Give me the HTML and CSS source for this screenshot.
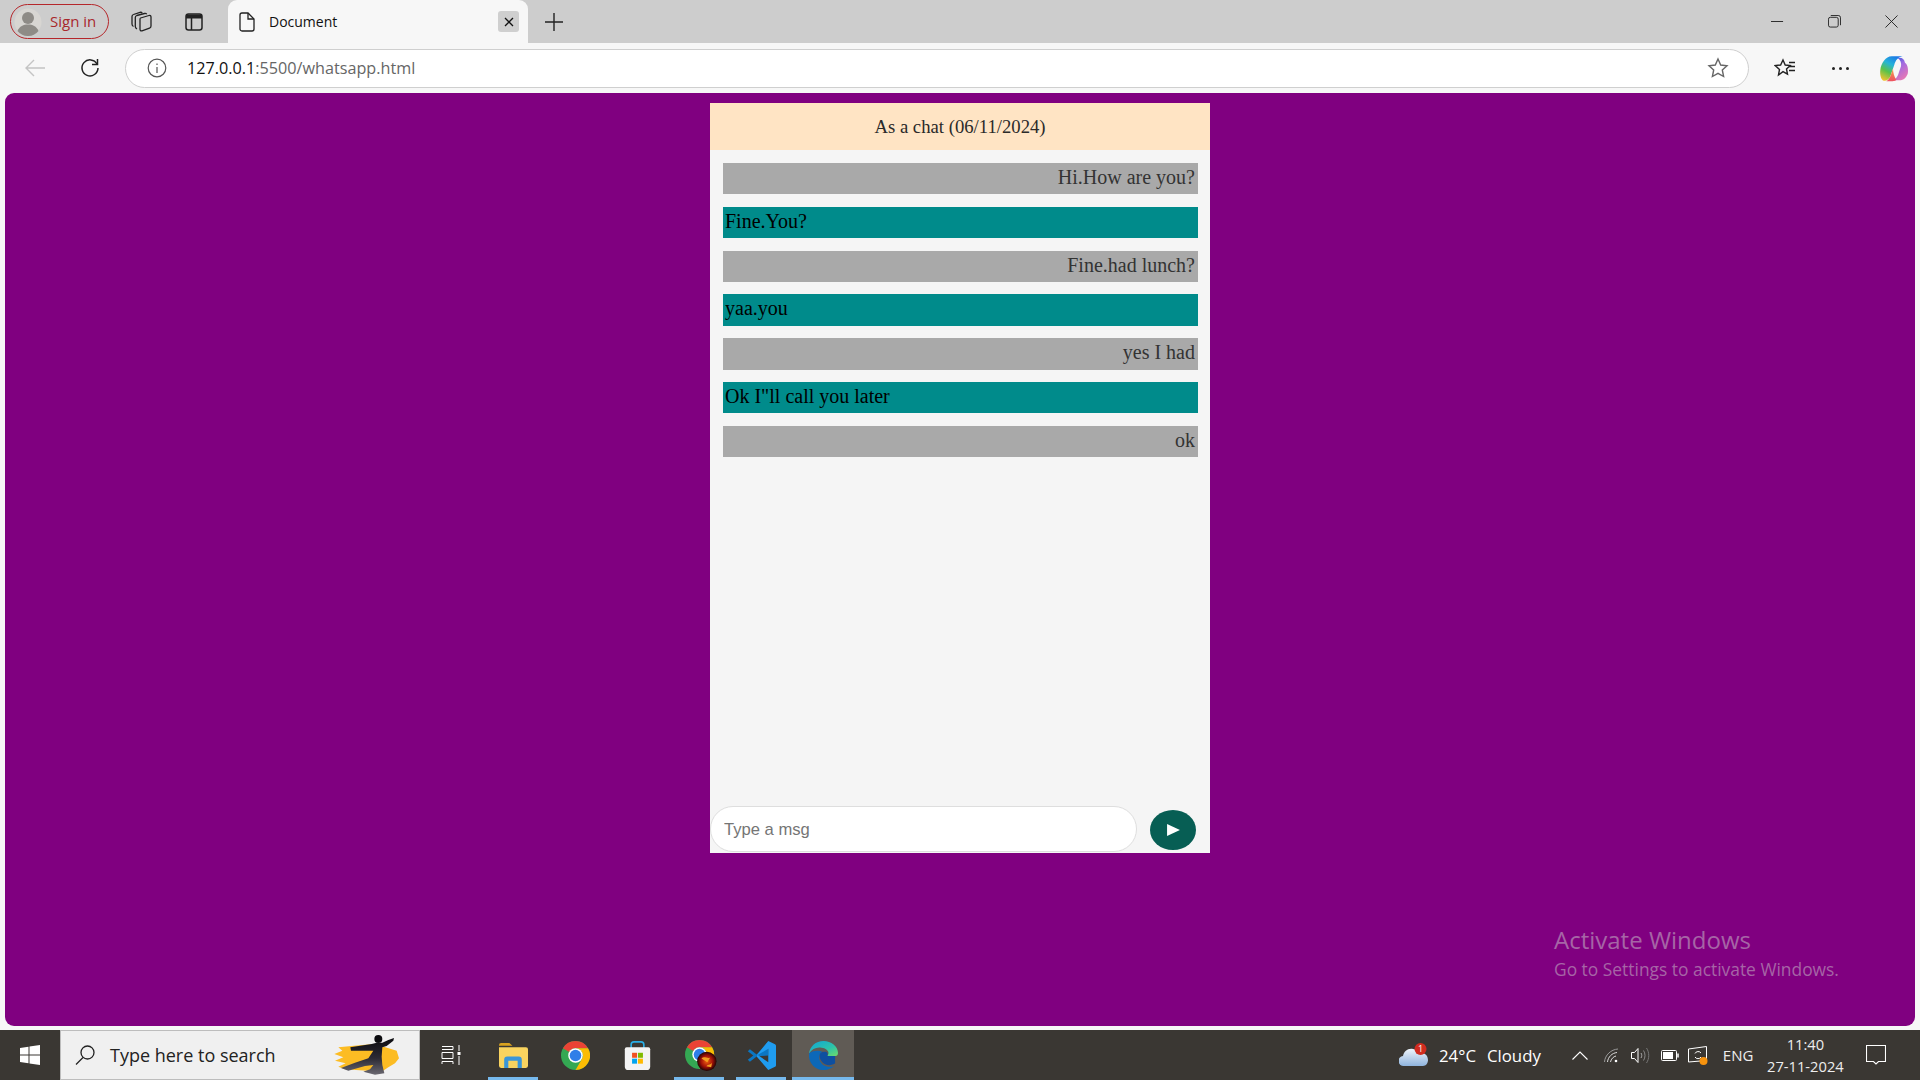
FILE: index.html
```html
<!DOCTYPE html>
<html lang="en">
<head>
    <meta charset="UTF-8">
    <title>Document</title>
    <link rel="stylesheet" href="styles.css">
</head>
<body>
    <!-- Tab strip -->
    <div class="tab-strip">
        <div class="sign-in">
            <svg class="avatar" viewBox="0 0 28 28"><circle cx="14" cy="14" r="13.5" fill="#d8d6d2"/><circle cx="14" cy="10" r="6" fill="#8e8b86"/><path d="M3.5 23c2-5 6-6.500 10.500-6.500s8.500 1.500 10.500 6.500a13.500 13.500 0 0 1-21 0z" fill="#8e8b86"/></svg>
            <span>Sign in</span>
        </div>
        <svg class="strip-icon collections" viewBox="0 0 21 21" fill="none" stroke="#222" stroke-width="1.300"><path d="M9.500 7 18 4.500c1-.3 2 .2 2 1.500v9c0 1-.5 1.800-1.500 2.100L11 19.800c-1.200.3-2-.3-2-1.500V8.500c0-.8 0-1.300.5-1.500z"/><path d="M6 18c-1-.5-1.700-1.300-1.700-2.500V6.500c0-1 .5-1.700 1.500-2L13.500 2.500c1-.2 1.800 0 2.200.8"/><path d="M2.500 15.500C1.500 15 1 14 1 13V5.500c0-1 .5-1.700 1.500-2L9 1.300c1-.2 1.700 0 2.200.7"/></svg>
        <svg class="strip-icon vertical-tabs" viewBox="0 0 18 18" fill="none" stroke="#222" stroke-width="1.500"><rect x="1" y="1" width="16" height="16" rx="2.500"/><path d="M1 3.500h16" stroke-width="4"/><path d="M6.500 5v12"/></svg>
        <div class="tab">
            <svg class="doc-icon" viewBox="0 0 16 20" fill="none" stroke="#222" stroke-width="1.300"><path d="M1 3a2 2 0 0 1 2-2h6l6 6v10a2 2 0 0 1-2 2H3a2 2 0 0 1-2-2z"/><path d="M9 1v6h6"/></svg>
            <span class="tab-title">Document</span>
            <div class="tab-close"><svg viewBox="0 0 10 10" stroke="#111" stroke-width="1.300"><path d="M1 1l8 8M9 1l-8 8"/></svg></div>
        </div>
        <svg class="new-tab" viewBox="0 0 18 18" stroke="#222" stroke-width="1.400"><path d="M9 0v18M0 9h18"/></svg>
        <div class="window-controls">
            <svg viewBox="0 0 14 14" stroke="#222" stroke-width="1"><path d="M0 7h13"/></svg>
            <svg viewBox="0 0 14 14" fill="none" stroke="#222" stroke-width="1"><rect x="0.500" y="2.500" width="10.500" height="10.500" rx="2"/><path d="M3 .5h8a2.500 2.500 0 0 1 2.500 2.500v8"/></svg>
            <svg viewBox="0 0 14 14" stroke="#222" stroke-width="1"><path d="M.5.5l13 13M13.500.5l-13 13"/></svg>
        </div>
    </div>

    <!-- Address bar -->
    <div class="toolbar">
        <svg class="back" viewBox="0 0 20 18" fill="none" stroke="#c4c4c4" stroke-width="1.400"><path d="M20 9H1M9 1 1 9l8 8"/></svg>
        <svg class="reload" viewBox="0 0 20 20" fill="none" stroke="#222" stroke-width="1.500"><path d="M17.500 1v5.500H12"/><path d="M17 6A8 8 0 1 0 18 10"/></svg>
        <div class="address">
            <svg class="info" viewBox="0 0 20 20" fill="none" stroke="#555" stroke-width="1.200"><circle cx="10" cy="10" r="8.800"/><path d="M10 9v6M10 5.500v1.500"/></svg>
            <span class="url"><b>127.0.0.1</b>:5500/whatsapp.html</span>
            <svg class="star" viewBox="0 0 22 22" fill="none" stroke="#666" stroke-width="1.400"><path d="M11 2l2.700 6 6.300.7-4.700 4.300 1.300 6.500L11 16.300 5.400 19.500 6.700 13 2 8.700 8.300 8z"/></svg>
        </div>
        <svg class="favs" viewBox="0 0 22 20" fill="none" stroke="#222" stroke-width="1.400"><path d="M9 2l2.200 5 5 .6-3.700 3.400 1 5.200L9 13.700 4.500 17l1-5.500L1.200 7.600l5.400-.6z"/><path d="M15 4.500h6M15 8.500h6M15 12.500h6"/></svg>
        <div class="dots"><i></i><i></i><i></i></div>
        <svg class="copilot" viewBox="0 0 135 120">
            <defs>
                <linearGradient id="cp1" x1="0.700" y1="0" x2="0.200" y2="1"><stop offset="0" stop-color="#1c78e6"/><stop offset="0.350" stop-color="#25b4d8"/><stop offset="0.650" stop-color="#5ac24a"/><stop offset="1" stop-color="#f2c230"/></linearGradient>
                <linearGradient id="cp2" x1="0.200" y1="0" x2="0.800" y2="1"><stop offset="0" stop-color="#3a5be0"/><stop offset="0.400" stop-color="#a36be0"/><stop offset="1" stop-color="#ee7ab0"/></linearGradient>
                <linearGradient id="cp3" x1="0.500" y1="0" x2="0.500" y2="1"><stop offset="0" stop-color="#f5a04a"/><stop offset="1" stop-color="#ee5060"/></linearGradient>
            </defs>
            <path d="M62 25H95C80 27 74 38 70 50L58 85C54 95 45 100 38 98 30 95 26 80 28 65 31 45 44 25 62 25Z" fill="url(#cp1)"/>
            <path d="M80 30Q98 26 102 44C112 50 112 70 110 78 104 92 96 97 85 97H62C75 95 81 85 84 72L90 55C92 45 88 35 80 30Z" fill="url(#cp2)"/>
            <path d="M58 85 66 62C66 75 70 85 76 96 72 99 65 100 60 100H46C52 97 56 90 58 85Z" fill="url(#cp3)"/>
        </svg>
    </div>

    <!-- Page -->
    <div class="viewport">
        <div class="chat">
            <div class="chat-header">As a chat (06/11/2024)</div>
            <div class="messages">
                <div class="msg sent">Hi.How are you?</div>
                <div class="msg received">Fine.You?</div>
                <div class="msg sent">Fine.had lunch?</div>
                <div class="msg received">yaa.you</div>
                <div class="msg sent">yes I had</div>
                <div class="msg received">Ok I"ll call you later</div>
                <div class="msg sent">ok</div>
            </div>
            <div class="composer">
                <input class="msg-input" type="text" placeholder="Type a msg">
                <button class="send"><svg viewBox="0 0 14 13"><path d="M0 0l14 6.500L0 13z" fill="#fff"/></svg></button>
            </div>
        </div>
        <div class="watermark">
            <div class="watermark-title">Activate Windows</div>
            <div class="watermark-sub">Go to Settings to activate Windows.</div>
        </div>
    </div>

    <!-- Taskbar -->
    <div class="taskbar">
        <div class="start">
            <svg viewBox="0 0 20 20" fill="#fff"><path d="M0 3l8.500-1.300v7.800H0zM9.500 1.500 20 0v9.500H9.500zM0 10.500h8.500v7.800L0 17zM9.500 10.500H20V20L9.500 18.500z"/></svg>
        </div>
        <div class="search">
            <svg class="search-icon" viewBox="0 0 20 20" fill="none" stroke="#222" stroke-width="1.300"><circle cx="12.500" cy="7.500" r="6.500"/><path d="M8 12.500 1 19.500"/></svg>
            <span>Type here to search</span>
            <svg class="mascot" viewBox="0 3 255 144">
                <defs><linearGradient id="kick" x1="0" y1="0" x2="0" y2="1"><stop offset="0" stop-color="#0c0c10"/><stop offset="0.550" stop-color="#2c2a34"/><stop offset="1" stop-color="#6a6870"/></linearGradient></defs>
                <path d="M40 52 120 44 150 42 215 62 222 85 210 100 190 112 170 125 60 118 40 110 62 100 30 92 55 82 28 72 52 62z" fill="#fcbc23"/>
                <circle cx="160" cy="27" r="12" fill="#0c0c10"/>
                <path d="M76 52 140 42 155 38 172 38 190 30 207 24 205 32 185 48 172 52 170 80 172 105 178 130 150 134 115 125 135 118 145 105 120 108 70 122 48 114 90 98 130 85 145 62 110 62 78 62z" fill="url(#kick)"/>
            </svg>
        </div>
        <div class="task-slot first">
            <svg class="task-view" viewBox="0 0 20 20" fill="none" stroke="#fff" stroke-width="1"><path d="M1 1.500h11v3H1M1 7.500h11v6H1zM1 19v-2.500h11V19M18 0v6M18 11v9"/><rect x="16.500" y="7" width="3" height="3" fill="#fff" stroke="none"/></svg>
        </div>
        <div class="task-slot open">
            <svg viewBox="0 0 28 24"><path d="M0 2a2 2 0 0 1 2-2h8l3 2.500h-13z" fill="#d9a21f"/><path d="M0 4h26a2 2 0 0 1 2 2v16a2 2 0 0 1-2 2H2a2 2 0 0 1-2-2z" fill="#f9d35f"/><path d="M5 24v-8a3 3 0 0 1 3-3h11a3 3 0 0 1 3 3v8h-4v-7H9v7z" fill="#3a95d8"/></svg>
        </div>
        <div class="task-slot">
            <svg class="chrome" viewBox="0 0 30 30"><circle cx="15" cy="15" r="15" fill="#34a853"/><path d="M15 0a15 15 0 0 1 13 7.500H15a7.500 7.500 0 0 0-6.500 3.750L2 7.500A15 15 0 0 1 15 0z" fill="#ea4335"/><path d="M28 7.500A15 15 0 0 1 15 30l6.500-11.250A7.500 7.500 0 0 0 15 7.500z" fill="#fbbc04"/><circle cx="15" cy="15" r="7.500" fill="#fff"/><circle cx="15" cy="15" r="6" fill="#2f7fe8"/></svg>
        </div>
        <div class="task-slot">
            <svg viewBox="0 0 30 32"><path d="M8 8V4a3 3 0 0 1 3-3h8a3 3 0 0 1 3 3v4" fill="none" stroke="#29aee6" stroke-width="1.800"/><path d="M1 9a2 2 0 0 1 2-2h24a2 2 0 0 1 2 2v19a4 4 0 0 1-4 4H5a4 4 0 0 1-4-4z" fill="#f3f3f3"/><rect x="9" y="13" width="5.500" height="5.500" fill="#f25022"/><rect x="15.500" y="13" width="5.500" height="5.500" fill="#7fba00"/><rect x="9" y="19.500" width="5.500" height="5.500" fill="#00a4ef"/><rect x="15.500" y="19.500" width="5.500" height="5.500" fill="#ffb900"/></svg>
        </div>
        <div class="task-slot open">
            <svg class="chrome-badged" viewBox="0 0 33 32">
                <defs><radialGradient id="fire"><stop offset="0" stop-color="#f06010"/><stop offset="0.600" stop-color="#a01008"/><stop offset="1" stop-color="#200404"/></radialGradient></defs>
                <circle cx="15" cy="15" r="15" fill="#34a853"/><path d="M15 0a15 15 0 0 1 13 7.500H15a7.500 7.500 0 0 0-6.500 3.750L2 7.500A15 15 0 0 1 15 0z" fill="#ea4335"/><path d="M28 7.500A15 15 0 0 1 15 30l6.500-11.250A7.500 7.500 0 0 0 15 7.500z" fill="#fbbc04"/><circle cx="15" cy="15" r="7.500" fill="#fff"/><circle cx="15" cy="15" r="6" fill="#2f7fe8"/>
                <circle cx="22.500" cy="22" r="10" fill="url(#fire)"/><path d="M17 19c3-3 6 1 9-1l-3 5zM22 27c2-2 5-1 6-4l-1 5z" fill="#f2a020"/>
            </svg>
        </div>
        <div class="task-slot open">
            <svg viewBox="0 0 30 30"><path d="M.8 10.500 3 8.500l7 5.500L21.500 1 22 15 10 16 3 21.500.8 19.500 6.500 15z" fill="#0b76c2"/><path d="M22 0l7 3.300c.7.300 1 1 1 1.700v20c0 .7-.3 1.400-1 1.700L22 30l-12-14 1-1.500L22 22V8l-12 7z" fill="#1f9cf0"/></svg>
        </div>
        <div class="task-slot open active">
            <svg viewBox="0 0 30 30">
                <defs>
                    <linearGradient id="edge1" x1="0" y1="0" x2="1" y2="1"><stop offset="0" stop-color="#0ea5d8"/><stop offset="0.600" stop-color="#2ec4a8"/><stop offset="1" stop-color="#6fdc6a"/></linearGradient>
                </defs>
                <path d="M15 0C7 0 1 5.500 0 13c3-5 8-7 13-6 5 .5 8 4 7 6.500l-1 2h8.500c1.500 0 2.500-1 2.500-3C30 5.500 23 0 15 0z" fill="url(#edge1)"/>
                <path d="M0 13c-1 8 5 16 13 17 4 .5 9-1 13-4-6 2-13 0-15-6-1.500-5 1-8 3-9-6-2-12 0-14 2z" fill="#0c68b8"/>
                <path d="M11 15c0 6 5 10 10 10 2 0 5-1 6-2v-7.500h-8c.5-2 .5-3-1-4-3-1-7 0-7 3.500z" fill="#0e4fa0"/>
            </svg>
        </div>
        <div class="tray">
            <div class="weather">
                <svg class="cloud" viewBox="0 0 30 24">
                    <defs><linearGradient id="cl" x1="0" y1="0" x2="0" y2="1"><stop offset="0" stop-color="#eef4fb"/><stop offset="1" stop-color="#8fb4de"/></linearGradient></defs>
                    <path d="M5 23a5 5 0 0 1-1-10c1-5 5-8 10-7 3 .5 5 2 6 4 5-1 9 2 9 7 0 3-2 6-5 6z" fill="url(#cl)"/>
                    <circle cx="21.500" cy="6" r="6" fill="#d02c20"/>
                    <text x="21.500" y="9" class="badge-num">1</text>
                </svg>
                <span class="temp">24°C</span>
                <span class="cond">Cloudy</span>
            </div>
            <svg class="chevron" viewBox="0 0 16 9" fill="none" stroke="#fff" stroke-width="1.100"><path d="M.5 8.500 8 1l7.500 7.500"/></svg>
            <svg class="wifi" viewBox="0 0 15 15" fill="none" stroke="#ddd" stroke-width="1"><path d="M.5 14C1 7 7 1.500 14 1" stroke="#999"/><path d="M3.500 14C4 9 8 5 13 4.500"/><path d="M6.500 14C7 11 9.500 8.500 12 8"/><circle cx="12" cy="13" r="1.300" fill="#fff" stroke="none"/></svg>
            <svg class="volume" viewBox="0 0 19 17" fill="none" stroke="#fff" stroke-width="1"><path d="M.5 5.500h3L7 1.500v14l-3.500-4h-3z"/><path d="M10 6c1 1.500 1 3.500 0 5" stroke="#aaa"/><path d="M12.500 3.500c2 3 2 7 0 10" stroke="#888"/><path d="M15.500 1c3 4.500 3 10.500 0 15" stroke="#777"/></svg>
            <svg class="battery" viewBox="0 0 18 11" fill="none" stroke="#fff" stroke-width="1"><rect x=".5" y=".5" width="15" height="10" rx="1"/><rect x="2" y="2" width="10" height="7" fill="#fff" stroke="none"/><path d="M17 3.500v4" stroke-width="1.500"/></svg>
            <svg class="update" viewBox="0 0 20 19" fill="none" stroke="#fff" stroke-width="1"><path d="M.5 3 18.500.5v14L.5 16z"/><path d="M7 7.500a3.500 3.500 0 0 1 6-.5M13 11a3.500 3.500 0 0 1-6 0"/><circle cx="15.500" cy="15" r="4" fill="#f7930e" stroke="none"/></svg>
            <span class="lang">ENG</span>
            <div class="clock"><div>11:40</div><div>27-11-2024</div></div>
            <svg class="notify" viewBox="0 0 20 20" fill="none" stroke="#fff" stroke-width="1.100"><path d="M.5.500h19v16h-7l-2.500 2.500-2.500-2.500h-7z"/></svg>
        </div>
    </div>
</body>
</html>
```

FILE: styles.css
```css
/* Global Styles */
* {
    margin: 0;
    padding: 0;
    box-sizing: border-box;
}

body {
    font-family: "Open Sans", "Noto Sans", sans-serif;
    background-color: #f7f7f7;
    display: flex;
    flex-direction: column;
    height: 100vh;
    overflow: hidden;
}

svg {
    display: block;
    flex: none;
}

/* Tab strip */
.tab-strip {
    height: 43px;
    background-color: #cdcdcd;
    display: flex;
    align-items: center;
    padding-left: 10px;
}

.sign-in {
    width: 99px;
    height: 35px;
    border: 1.500px solid #b5272b;
    border-radius: 18px;
    display: flex;
    align-items: center;
    gap: 8px;
    padding-left: 3px;
    font-size: 15px;
    color: #a8282c;
}

.sign-in span {
    padding-bottom: 2px;
}

.avatar {
    width: 28px;
    height: 28px;
}

.strip-icon {
    width: 21px;
    height: 21px;
}

.collections {
    margin-left: 22px;
}

.vertical-tabs {
    width: 18px;
    height: 18px;
    margin-left: 33px;
}

.tab {
    width: 300px;
    height: 43px;
    margin-left: 25px;
    background-color: #f7f7f7;
    border-radius: 9px 9px 0 0;
    display: flex;
    align-items: center;
    padding-left: 11px;
}

.doc-icon {
    width: 16px;
    height: 20px;
}

.tab-title {
    font-size: 14px;
    color: #111;
    margin-left: 14px;
    padding-bottom: 1px;
    flex: 1;
}

.tab-close {
    width: 21px;
    height: 21px;
    background-color: #cfcfcf;
    border-radius: 3px;
    margin-right: 9px;
    display: flex;
    align-items: center;
    justify-content: center;
}

.tab-close svg {
    width: 10px;
    height: 10px;
}

.new-tab {
    width: 18px;
    height: 18px;
    margin-left: 17px;
}

.window-controls {
    margin-left: auto;
    display: flex;
    gap: 44px;
    padding-right: 22px;
}

.window-controls svg {
    width: 13px;
    height: 13px;
}

/* Address bar */
.toolbar {
    height: 50px;
    background-color: #f7f7f7;
    display: flex;
    align-items: center;
    padding-left: 25px;
}

.back {
    width: 20px;
    height: 18px;
}

.reload {
    width: 20px;
    height: 20px;
    margin-left: 35px;
}

.address {
    width: 1624px;
    height: 39px;
    margin-left: 25px;
    background-color: #fff;
    border: 1px solid #cfcfcf;
    border-radius: 20px;
    display: flex;
    align-items: center;
    padding-left: 21px;
}

.info {
    width: 20px;
    height: 20px;
}

.url {
    font-size: 16.200px;
    color: #666;
    margin-left: 20px;
    flex: 1;
}

.url b {
    font-weight: 400;
    color: #111;
}

.star {
    width: 22px;
    height: 22px;
    margin-right: 19px;
}

.favs {
    width: 22px;
    height: 20px;
    margin-left: 25px;
}

.dots {
    display: flex;
    gap: 4px;
    margin-left: 36px;
}

.dots i {
    width: 3px;
    height: 3px;
    border-radius: 50%;
    background-color: #222;
}

.copilot {
    width: 45px;
    height: 40px;
    margin-left: 22px;
}

/* Page */
.viewport {
    flex: 1;
    margin: 0 5px 4px;
    background-color: #800080;
    border-radius: 9px;
    position: relative;
    display: flex;
    justify-content: center;
    padding-top: 10px;
}

.chat {
    width: 500px;
    height: 750px;
    background-color: #f5f5f5;
    display: flex;
    flex-direction: column;
}

.chat-header {
    height: 47px;
    padding-top: 1px;
    background-color: #ffe4c4;
    color: #2a2a2a;
    font-family: "Liberation Serif", serif;
    font-size: 18.700px;
    display: flex;
    align-items: center;
    justify-content: center;
}

.messages {
    flex: 1;
    padding: 13px 12px 0 13px;
    display: flex;
    flex-direction: column;
    gap: 12.400px;
}

.msg {
    height: 31.400px;
    line-height: 28px;
    font-family: "Liberation Serif", serif;
    font-size: 20px;
}

.msg.sent {
    background-color: #a9a9a9;
    color: #333;
    text-align: right;
    padding-right: 3px;
}

.msg.received {
    background-color: #008b8b;
    color: #000;
    padding-left: 2px;
}

.composer {
    height: 47px;
    display: flex;
    align-items: flex-start;
    padding-bottom: 1px;
}

.msg-input {
    width: 427px;
    height: 46px;
    border: 1px solid #dedede;
    border-radius: 23px;
    background-color: #fff;
    padding: 2px 0 0 13px;
    font-family: "Liberation Sans", sans-serif;
    font-size: 16.600px;
    outline: none;
}

.msg-input::placeholder {
    color: #757575;
}

.send {
    width: 46px;
    height: 40px;
    margin: 4px 0 0 13px;
    border: none;
    border-radius: 50%;
    background-color: #075e54;
    display: flex;
    align-items: center;
    justify-content: center;
}

.send svg {
    width: 13px;
    height: 12px;
}

/* Activate Windows notice */
.watermark {
    position: absolute;
    left: 1549px;
    top: 830px;
    color: #a665a6;
}

.watermark-title {
    font-size: 24px;
    line-height: 34px;
}

.watermark-sub {
    font-size: 17.400px;
    line-height: 24px;
}

/* Taskbar */
.taskbar {
    height: 50px;
    background-color: #3a3733;
    display: flex;
    color: #fff;
}

.start {
    width: 60px;
    display: flex;
    align-items: center;
    justify-content: center;
}

.start svg {
    width: 20px;
    height: 20px;
}

.search {
    width: 360px;
    background-color: #f0f0f0;
    border: 1px solid #bdbdbd;
    display: flex;
    align-items: center;
    padding-left: 14px;
    color: #222;
    font-size: 18px;
}

.search-icon {
    width: 20px;
    height: 20px;
    margin-right: 15px;
}

.search span {
    flex: 1;
}

.mascot {
    width: 85px;
    height: 48px;
    margin-right: 9px;
}

.task-slot {
    width: 62px;
    display: flex;
    align-items: center;
    justify-content: center;
    position: relative;
}

.task-slot svg {
    width: 29px;
    height: 29px;
}

.task-slot .task-view {
    width: 20px;
    height: 20px;
}

.task-slot .chrome-badged {
    width: 32px;
    height: 31px;
    margin-left: 3px;
}

.task-slot.active {
    background-color: #605b55;
}

.task-slot.open::after {
    content: "";
    position: absolute;
    left: 6px;
    right: 6px;
    bottom: 0;
    height: 3px;
    background-color: #76b9ed;
}

.task-slot.active::after {
    left: 0;
    right: 0;
}

.tray {
    flex: 1;
    display: flex;
    align-items: center;
    padding-left: 545px;
    font-size: 16.800px;
}

.weather {
    display: flex;
    align-items: center;
}

.cloud {
    width: 30px;
    height: 24px;
}

.badge-num {
    fill: #fff;
    font-size: 9px;
    text-anchor: middle;
}

.temp {
    margin-left: 10px;
}

.cond {
    margin-left: 11px;
}

.chevron {
    width: 16px;
    height: 9px;
    margin-left: 31px;
}

.wifi {
    width: 15px;
    height: 15px;
    margin-left: 16px;
}

.volume {
    width: 19px;
    height: 17px;
    margin-left: 12.500px;
}

.battery {
    width: 18px;
    height: 11px;
    margin-left: 11px;
}

.update {
    width: 20px;
    height: 19px;
    margin-left: 9px;
}

.lang {
    font-size: 15px;
    margin-left: 14.500px;
    color: #eee;
}

.clock {
    width: 78px;
    margin-left: 13px;
    text-align: center;
    font-size: 14.700px;
    line-height: 22px;
    color: #eee;
}

.notify {
    width: 20px;
    height: 20px;
    margin-left: 21.700px;
}
```
